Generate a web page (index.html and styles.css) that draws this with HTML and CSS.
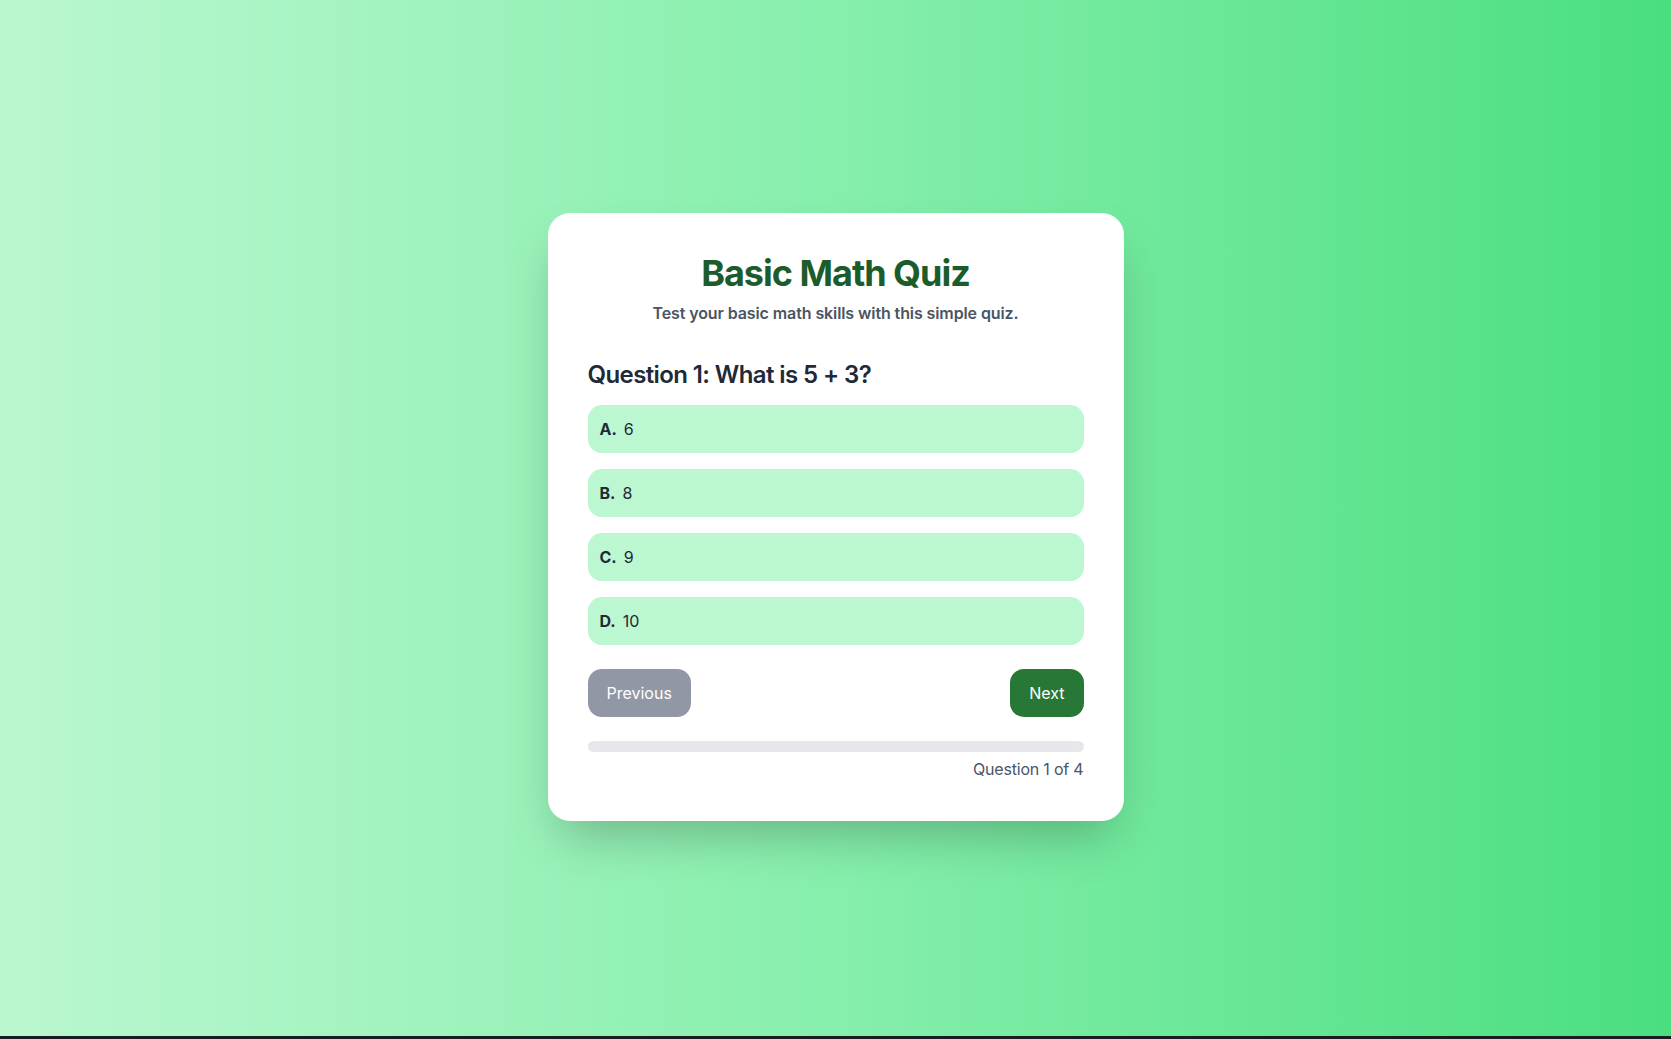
FILE: index.html
```html
<!DOCTYPE html>
<html lang="en">
  <head>
    <meta charset="UTF-8" />
    <meta name="viewport" content="width=device-width, initial-scale=1.0" />
    <title>Basic Math Quiz</title>
    <link rel="stylesheet" href="styles.css">
  </head>
  <body>
    <div class="page">
      <div class="quiz-card">
        <div class="quiz-header">
          <h1>Basic Math Quiz</h1>
          <p class="subtitle">Test your basic math skills with this simple quiz.</p>
        </div>

        <h2 class="question">Question 1: What is 5 + 3?</h2>

        <div class="options">
          <button class="option"><span class="option-key">A.</span> 6</button>
          <button class="option"><span class="option-key">B.</span> 8</button>
          <button class="option"><span class="option-key">C.</span> 9</button>
          <button class="option"><span class="option-key">D.</span> 10</button>
        </div>

        <div class="nav-buttons">
          <button class="btn btn-prev">Previous</button>
          <button class="btn btn-next">Next</button>
        </div>

        <div class="progress-bar">
          <div class="progress-fill" style="width: 0%"></div>
        </div>
        <p class="progress-text">Question 1 of 4</p>
      </div>
    </div>
  </body>
</html>
```

FILE: styles.css
```css
html {
  background: #1c1b22;
}

body {
  margin: 0;
  font-family: Inter, 'Noto Sans', sans-serif;
  color: #1f2937;
}

.page {
  height: calc(100vh - 3px);
  background: linear-gradient(90deg, #bbf7d0 0%, #86efac 50%, #4ade80 100%);
  display: flex;
  align-items: center;
  justify-content: center;
  padding-bottom: 3px;
  box-sizing: border-box;
}

.quiz-card {
  width: 576px;
  background: white;
  border-radius: 22px;
  padding: 40px;
  box-sizing: border-box;
  box-shadow: 0 25px 50px -12px rgba(0, 0, 0, 0.25);
}

.quiz-header {
  text-align: center;
  margin-bottom: 34px;
}

.quiz-header h1 {
  margin: 0 0 8px 0;
  font-size: 36px;
  line-height: 40px;
  font-weight: 700;
  color: #1c5c2c;
  letter-spacing: -1px;
}

.subtitle {
  margin: 0;
  font-size: 16px;
  line-height: 24px;
  font-weight: 600;
  color: #4b5563;
  letter-spacing: -0.1px;
}

.question {
  margin: 0 0 14px 0;
  font-size: 24px;
  line-height: 32px;
  font-weight: 600;
  color: #1f2937;
  letter-spacing: -0.6px;
}

.options {
  display: flex;
  flex-direction: column;
  gap: 16px;
}

.option {
  display: flex;
  align-items: center;
  gap: 7px;
  height: 48px;
  padding: 0 12px;
  border: none;
  border-radius: 14px;
  background: #bbf7d0;
  font-family: inherit;
  font-size: 16px;
  color: #1f2937;
  text-align: left;
  cursor: pointer;
}

.option-key {
  font-weight: 700;
}

.nav-buttons {
  display: flex;
  justify-content: space-between;
  margin-top: 24px;
}

.btn {
  height: 48px;
  padding: 0 19px;
  border: none;
  border-radius: 14px;
  font-family: inherit;
  font-size: 16px;
  font-weight: 400;
  color: white;
  cursor: pointer;
}

.btn-prev {
  background: #9197a4;
}

.btn-next {
  background: #277836;
}

.progress-bar {
  margin-top: 24px;
  height: 11px;
  background: #e5e7eb;
  border-radius: 999px;
  overflow: hidden;
}

.progress-fill {
  height: 100%;
  background: #277836;
}

.progress-text {
  margin: 5px 0 0 0;
  text-align: right;
  font-size: 16px;
  line-height: 24px;
  color: #4b5563;
  letter-spacing: -0.2px;
}
```
